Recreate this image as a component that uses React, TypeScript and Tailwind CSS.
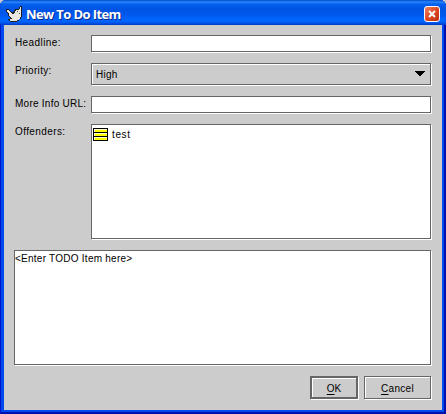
import type { ReactNode } from 'react';

const etched =
  'border border-[#666666] shadow-[1px_1px_0_#ffffff,inset_1px_1px_0_#ffffff]';

function Label({ children, className = '' }: { children: ReactNode; className?: string }) {
  return <span className={`w-[77px] shrink-0 pl-px leading-[15px] whitespace-nowrap ${className}`}>{children}</span>;
}

function BirdIcon() {
  return (
    <svg width="17" height="17" viewBox="0 0 17 17" shapeRendering="crispEdges" className="mt-px shrink-0">
      <path d="M0.5 3.5H2.5L5.5 6.5L7.5 7.5L9.5 3.5L12.5 3.5L14.5 0.5H15.5V10.5L13.5 13.5L10.5 15.5H4.5L2.5 13.5L5.5 12.5L2.5 9.5L2.5 7.5L0.5 5.5Z" fill="#e8e8e0" stroke="#202020" strokeWidth="1" />
      <path d="M11 5h1v1h-1zM13 7h1v1h-1z" fill="#505050" />
    </svg>
  );
}

function ClassIcon() {
  return (
    <svg width="15" height="13" viewBox="0 0 15 13" shapeRendering="crispEdges" className="shrink-0">
      <path d="M0 0h15v13H0z" fill="#000000" />
      <path d="M1 1h13v3H1zM1 5h13v3H1zM1 9h13v3H1z" fill="#ffffcc" />
      <path d="M2 2h12v2H2zM2 6h12v2H2zM2 10h12v2H2z" fill="#ffff00" />
    </svg>
  );
}

function CloseButton() {
  return (
    <button className="flex h-4 w-4 items-center justify-center rounded-[3px] border border-white bg-linear-to-br from-[#ee8060] via-[#df4820] to-[#bc3010]">
      <svg width="8" height="8" viewBox="0 0 8 8">
        <path d="M1 1L7 7M7 1L1 7" stroke="#ffffff" strokeWidth="2" />
      </svg>
    </button>
  );
}

export default function App() {
  return (
    <div className="h-[414px] w-[446px] bg-[#cccccc]">
      <div className="flex h-full w-full flex-col overflow-hidden rounded-t-[6px] bg-[#0048f0] pr-1 pb-1 pl-1 font-['Liberation_Sans',Arial,sans-serif] text-[10px] tracking-[0.25px] text-black shadow-[inset_1px_0_0_#0018c8,inset_-2px_0_0_#0010a8,inset_0_-2px_0_#0010a8]">
        <header className="-mx-1 flex h-[25px] shrink-0 items-center justify-between bg-[linear-gradient(to_bottom,#0048c8_0px,#2a88ff_2px,#0660f0_4px,#0054e3_9px,#0058ee_15px,#0066ff_20px,#0060f8_22px,#0038c0_25px)] pr-[6px] pl-[6px]">
          <div className="flex items-center pt-[2px]">
            <BirdIcon />
            <span className="ml-[3px] font-['Open_Sans',sans-serif] text-[13px] leading-4 font-bold tracking-[-0.6px] whitespace-nowrap text-white [text-shadow:1px_1px_0_#0b2b8c]">
              New To Do Item
            </span>
          </div>
          <div className="pt-[3px]"><CloseButton /></div>
        </header>

        <main className="flex min-h-0 flex-1 flex-col bg-[#cccccc] pt-[10px] pr-[11px] pl-[10px]">
          <div className="flex h-[17px] shrink-0">
            <Label className="tracking-[0.4px]">Headline:</Label>
            <div className={`flex-1 bg-white ${etched}`} />
          </div>
          <div className="mt-[11px] flex h-[22px] shrink-0">
            <Label className="tracking-[0.3px]">Priority:</Label>
            <div className={`flex flex-1 items-center justify-between pr-[5px] pl-[4px] ${etched}`}>
              <span className="pt-px leading-[14px]">High</span>
              <svg width="10" height="5" viewBox="0 0 10 5" shapeRendering="crispEdges" className="mb-[2px]">
                <path d="M0 0h10v1H0zM1 1h8v1H1zM2 2h6v1H2zM3 3h4v1H3zM4 4h2v1H4z" />
              </svg>
            </div>
          </div>
          <div className="mt-[11px] flex h-[17px] shrink-0">
            <Label className="tracking-[0.25px]">More Info URL:</Label>
            <div className={`flex-1 bg-white ${etched}`} />
          </div>
          <div className="mt-[11px] flex h-[115px] shrink-0">
            <Label className="tracking-[0.4px]">Offenders:</Label>
            <div className={`flex-1 bg-white pt-[2px] pl-[1px] ${etched}`}>
              <div className="flex items-center">
                <ClassIcon />
                <span className="ml-[4px] pt-px leading-[14px] tracking-[0.6px]">test</span>
              </div>
            </div>
          </div>
          <div className={`mt-[11px] h-[115px] shrink-0 bg-white pt-px leading-[14px] whitespace-nowrap ${etched}`}>
            &lt;Enter TODO Item here&gt;
          </div>
          <div className="mt-[11px] flex shrink-0 justify-end gap-[6px]">
            <button className="h-[23px] w-[48px] border-2 border-[#666666] pt-px tracking-[0px] shadow-[1px_1px_0_#ffffff,inset_1px_1px_0_#ffffff]">
              <span className="underline underline-offset-2">O</span>K
            </button>
            <button className={`h-[23px] w-[67px] pt-px tracking-[0.3px] ${etched}`}>
              <span className="underline underline-offset-2">C</span>ancel
            </button>
          </div>
        </main>
      </div>
    </div>
  );
}
